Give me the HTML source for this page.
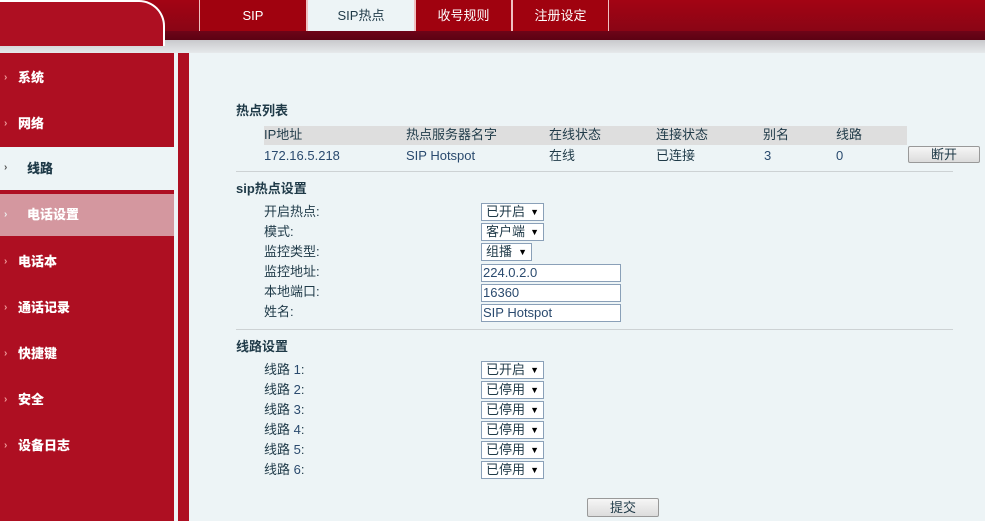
<!DOCTYPE html>
<html><head><meta charset="utf-8"><style>
*{margin:0;padding:0;box-sizing:border-box}
body{width:985px;height:521px;overflow:hidden;background:#edf4f6;font-family:"Liberation Sans","Noto Sans CJK SC",sans-serif;font-size:13px;line-height:16px;color:#1f3a48;position:relative}
.abs{position:absolute;line-height:16px;height:16px;white-space:nowrap}
.top{left:0;top:0;width:985px;height:31px;background:linear-gradient(#a30414,#8a0515)}
.band{left:0;top:31px;width:985px;height:10px;background:linear-gradient(#6e0418,#5a0212)}
.gray{left:0;top:40px;width:985px;height:13px;background:linear-gradient(#c9c9cc,#e6e9eb)}
.corner{left:0;top:0;width:165px;height:46px!important;background:#ae0f22;border-top-right-radius:26px;border-right:2px solid #fff;border-top:2px solid #fff}
.tab{top:0;height:31px!important;line-height:32px;color:#fff;text-align:center;font-size:13px;background:#a0020f;border-left:1px solid #f0c0c0;border-right:1px solid #f0c0c0}
.side{left:0;top:53px;width:174px;height:468px!important;background:#ae0f22}
.strip{left:178px;top:53px;width:11px;height:468px!important;background:#ae0f22}
.mi{left:0;width:174px;color:#fff;font-weight:bold;font-size:13px}
.mi span{position:absolute;left:4px;top:0;font-size:10px;color:#e99}
.mi b{position:absolute;left:18px;top:0}
.b{font-weight:bold}
.th{left:264px;top:126px;width:643px;height:19px!important;background:#dedede}
.v{color:#2a4a6e}
.sel{height:18px!important;border:1px solid #8aa0b8;background:#fff;padding-left:4px;line-height:16px}
.sel:after{content:"▼";position:absolute;right:4px;top:0;font-size:9px;color:#000}
.inp{height:18px!important;width:140px;border:1px solid #8aa0b8;background:#fff;padding-left:1px;line-height:16px}
.btn{height:17px!important;border:1px solid #999;border-radius:2px;background:linear-gradient(#f6f6f6,#dcdcdc);text-align:center;line-height:15px}
.hr{left:236px;width:717px;height:1px!important;background:#cdd2d4}
</style></head><body>
<div class="abs top"></div>
<div class="abs band"></div>
<div class="abs gray"></div>
<div class="abs corner"></div>
<div class="abs tab" style="left:199px;width:108px">SIP</div>
<div class="abs tab" style="left:307px;width:108px;background:#edf4f6;color:#1f3a48">SIP热点</div>
<div class="abs tab" style="left:415px;width:97px">收号规则</div>
<div class="abs tab" style="left:512px;width:97px">注册设定</div>
<div class="abs side"></div>
<div class="abs strip"></div>
<div class="abs mi" style="top:70px"><span>›</span><b>系统</b></div>
<div class="abs mi" style="top:116px"><span>›</span><b>网络</b></div>
<div class="abs mi" style="top:147px;height:43px;background:#edf4f6;color:#1f3a48"><span style="top:13px;color:#555">›</span><b style="left:27px;top:14px">线路</b></div>
<div class="abs mi" style="top:194px;height:42px;background:#d4979f"><span style="top:13px;color:#eee">›</span><b style="left:27px;top:13px">电话设置</b></div>
<div class="abs mi" style="top:254px"><span>›</span><b>电话本</b></div>
<div class="abs mi" style="top:300px"><span>›</span><b>通话记录</b></div>
<div class="abs mi" style="top:346px"><span>›</span><b>快捷键</b></div>
<div class="abs mi" style="top:392px"><span>›</span><b>安全</b></div>
<div class="abs mi" style="top:438px"><span>›</span><b>设备日志</b></div>

<div class="abs b" style="left:236px;top:103px">热点列表</div>
<div class="abs th"></div>
<div class="abs" style="left:264px;top:127px">IP地址</div>
<div class="abs" style="left:406px;top:127px">热点服务器名字</div>
<div class="abs" style="left:549px;top:127px">在线状态</div>
<div class="abs" style="left:656px;top:127px">连接状态</div>
<div class="abs" style="left:763px;top:127px">别名</div>
<div class="abs" style="left:836px;top:127px">线路</div>
<div class="abs v" style="left:264px;top:148px">172.16.5.218</div>
<div class="abs v" style="left:406px;top:148px">SIP Hotspot</div>
<div class="abs" style="left:549px;top:148px">在线</div>
<div class="abs" style="left:656px;top:148px">已连接</div>
<div class="abs v" style="left:764px;top:148px">3</div>
<div class="abs v" style="left:836px;top:148px">0</div>
<div class="abs btn" style="left:908px;top:146px;width:72px">断开</div>
<div class="abs hr" style="top:171px"></div>

<div class="abs b" style="left:236px;top:181px">sip热点设置</div>
<div class="abs" style="left:264px;top:204px">开启热点:</div>
<div class="abs" style="left:264px;top:224px">模式:</div>
<div class="abs" style="left:264px;top:244px">监控类型:</div>
<div class="abs" style="left:264px;top:264px">监控地址:</div>
<div class="abs" style="left:264px;top:284px">本地端口:</div>
<div class="abs" style="left:264px;top:304px">姓名:</div>
<div class="abs sel" style="left:481px;top:203px;width:63px">已开启</div>
<div class="abs sel" style="left:481px;top:223px;width:63px">客户端</div>
<div class="abs sel" style="left:481px;top:243px;width:51px">组播</div>
<div class="abs inp v" style="left:481px;top:264px">224.0.2.0</div>
<div class="abs inp v" style="left:481px;top:284px">16360</div>
<div class="abs inp v" style="left:481px;top:304px">SIP Hotspot</div>
<div class="abs hr" style="top:329px"></div>

<div class="abs b" style="left:236px;top:339px">线路设置</div>
<div class="abs" style="left:264px;top:362px">线路 <span class="v">1</span>:</div>
<div class="abs" style="left:264px;top:382px">线路 <span class="v">2</span>:</div>
<div class="abs" style="left:264px;top:402px">线路 <span class="v">3</span>:</div>
<div class="abs" style="left:264px;top:422px">线路 <span class="v">4</span>:</div>
<div class="abs" style="left:264px;top:442px">线路 <span class="v">5</span>:</div>
<div class="abs" style="left:264px;top:462px">线路 <span class="v">6</span>:</div>
<div class="abs sel" style="left:481px;top:361px;width:63px">已开启</div>
<div class="abs sel" style="left:481px;top:381px;width:63px">已停用</div>
<div class="abs sel" style="left:481px;top:401px;width:63px">已停用</div>
<div class="abs sel" style="left:481px;top:421px;width:63px">已停用</div>
<div class="abs sel" style="left:481px;top:441px;width:63px">已停用</div>
<div class="abs sel" style="left:481px;top:461px;width:63px">已停用</div>
<div class="abs btn" style="left:587px;top:498px;width:72px;height:19px!important;line-height:17px">提交</div>
</body></html>
